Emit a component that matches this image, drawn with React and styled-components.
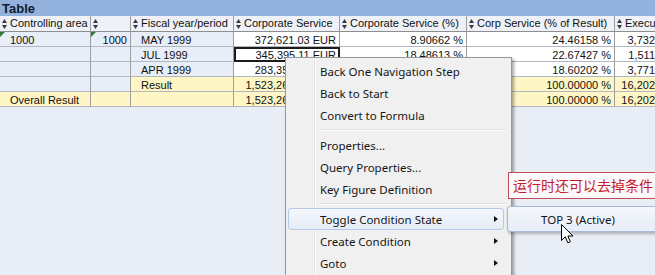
import React from 'react';
import styled, { createGlobalStyle } from 'styled-components';

const GlobalStyle = createGlobalStyle`
  html, body { margin: 0; padding: 0; background: #e9edf5; }
  body { width: 655px; height: 275px; overflow: hidden; }
`;

const Page = styled.div`
  position: relative;
  width: 655px;
  height: 275px;
  overflow: hidden;
  background: #e9edf5;
  font-family: "Liberation Sans", Arial, sans-serif;
`;

const TitleBar = styled.div`
  height: 16px;
  box-sizing: border-box;
  padding-left: 2px;
  background: #93b1dd;
  color: #111b2e;
  font: bold 13px/17px "Liberation Sans", Arial, sans-serif;
`;

const Grid = styled.div`
  display: grid;
  width: 722px;
  grid-template-columns: 91px 40px 103px 106px 127px 148px 107px;
  grid-template-rows: 16px;
  grid-auto-rows: 15px;
`;

const toneBg = {
  head: '#eef1f7',
  dim: '#e8eef8',
  data: '#ffffff',
  sum: '#fef6c4',
};

const Cell = styled.div`
  position: relative;
  box-sizing: border-box;
  overflow: hidden;
  white-space: nowrap;
  border-right: 1px solid #9d9d9d;
  border-bottom: 1px solid ${(p) => (p.$tone === 'head' ? '#8e8e8e' : '#b3b7bf')};
  background: ${(p) => toneBg[p.$tone || 'data']};
  color: #111;
  font-size: 11px;
  line-height: 14px;
  padding-top: 1px;
  padding-left: ${(p) => (p.$align === 'right' ? '0' : '10px')};
  padding-right: ${(p) => (p.$align === 'right' ? '3px' : '0')};
  text-align: ${(p) => p.$align || 'left'};
  outline: ${(p) => (p.$selected ? '2px solid #1c1c1c' : 'none')};
  outline-offset: -2px;
  &::before {
    content: '';
    display: ${(p) => (p.$marker ? 'block' : 'none')};
    position: absolute;
    left: 0;
    top: 0;
    border-top: 5px solid #2f7a36;
    border-right: 5px solid transparent;
  }
`;

const HeadCell = styled(Cell)`
  display: flex;
  align-items: center;
  gap: 3px;
  padding: 0 0 0 2px;
  line-height: 15px;
`;

const SortIconSvg = styled.svg`
  flex: none;
  width: 5px;
  height: 10px;
`;

const SortIcon = () => (
  <SortIconSvg viewBox="0 0 5 10">
    <path d="M2.5 0 L5 4 L0 4 Z M0 6 L5 6 L2.5 10 Z" fill="#3b3b3b" />
  </SortIconSvg>
);

const Menu = styled.div`
  position: absolute;
  left: 285px;
  top: 57px;
  width: 227px;
  height: 232px;
  box-sizing: border-box;
  padding: 2px;
  background: #f0f0f0;
  border: 1px solid #979797;
  box-shadow: 2px 2px 3px rgba(0, 0, 0, 0.35);
  font-family: "Noto Sans", "Open Sans", sans-serif;
  font-size: 11.5px;
  color: #151515;
  &::before {
    content: '';
    position: absolute;
    left: 28px;
    top: 2px;
    bottom: 0;
    width: 1px;
    background: #e2e3e3;
    border-right: 1px solid #ffffff;
  }
`;

const Item = styled.div`
  position: relative;
  display: flex;
  align-items: center;
  justify-content: space-between;
  height: 22px;
  box-sizing: border-box;
  margin-right: ${(p) => (p.$sub ? '0' : '5px')};
  padding: 0 5px 0 ${(p) => (p.$sub ? '33px' : '31px')};
  border: 1px solid ${(p) => (p.$active ? '#b4c9e6' : 'transparent')};
  border-radius: 3px;
  background: ${(p) =>
    p.$active ? 'linear-gradient(#f4f7fc, #e6edf8)' : 'transparent'};
  white-space: nowrap;
`;

const Arrow = styled.span`
  width: 0;
  height: 0;
  border-top: 3.5px solid transparent;
  border-bottom: 3.5px solid transparent;
  border-left: 4px solid #111;
`;

const Separator = styled.div`
  height: 8px;
  margin-left: 30px;
  margin-right: 2px;
  display: flex;
  flex-direction: column;
  justify-content: center;
  &::after {
    content: '';
    height: 1px;
    background: #e0e0e0;
    border-bottom: 1px solid #ffffff;
  }
`;

const SubMenu = styled.div`
  position: absolute;
  left: 507px;
  top: 206px;
  width: 165px;
  font-family: "Noto Sans", "Open Sans", sans-serif;
  font-size: 11.5px;
  color: #151515;
  box-shadow: 1px 2px 3px rgba(0, 0, 0, 0.25);
  border-radius: 3px;
  & > div {
    height: 26px;
    border-color: #a8b9d2;
  }
`;

const Note = styled.div`
  position: absolute;
  left: 508px;
  top: 172px;
  width: 165px;
  height: 27px;
  box-sizing: border-box;
  padding-left: 4px;
  border: 1px solid #bf4a5a;
  background: #fffafa;
  color: #c41a2c;
  font: 14px/25px "Noto Sans CJK SC", "Noto Sans", sans-serif;
  white-space: nowrap;
`;

const Cursor = styled.svg`
  position: absolute;
  left: 561px;
  top: 224px;
  width: 13px;
  height: 21px;
`;

const headers = [
  { t: 'Controlling area' },
  { t: '' },
  { t: 'Fiscal year/period' },
  { t: 'Corporate Service' },
  { t: 'Corporate Service (%)' },
  { t: 'Corp Service (% of Result)' },
  { t: 'Executive' },
];

const R = 'right';

const rows = [
  [
    { t: '1000', tone: 'dim', marker: true },
    { t: '1000', tone: 'dim', align: R, marker: true },
    { t: 'MAY 1999', tone: 'dim' },
    { t: '372,621.03 EUR', align: R },
    { t: '8.90662 %', align: R },
    { t: '24.46158 %', align: R },
    { t: '3,732,905.17 EUR', align: R },
  ],
  [
    { t: '', tone: 'dim' },
    { t: '', tone: 'dim' },
    { t: 'JUL 1999', tone: 'dim' },
    { t: '345,395.11 EUR', align: R, selected: true },
    { t: '18.48613 %', align: R },
    { t: '22.67427 %', align: R },
    { t: '1,511,228.40 EUR', align: R },
  ],
  [
    { t: '', tone: 'dim' },
    { t: '', tone: 'dim' },
    { t: 'APR 1999', tone: 'dim' },
    { t: '283,354.86 EUR', align: R },
    { t: '15.16570 %', align: R },
    { t: '18.60202 %', align: R },
    { t: '3,771,036.52 EUR', align: R },
  ],
  [
    { t: '', tone: 'dim' },
    { t: '', tone: 'dim' },
    { t: 'Result', tone: 'sum' },
    { t: '1,523,261.02 EUR', tone: 'sum', align: R },
    { t: '100.00000 %', tone: 'sum', align: R },
    { t: '100.00000 %', tone: 'sum', align: R },
    { t: '16,202,417.93 EUR', tone: 'sum', align: R },
  ],
  [
    { t: 'Overall Result', tone: 'sum' },
    { t: '', tone: 'sum' },
    { t: '', tone: 'sum' },
    { t: '1,523,261.02 EUR', tone: 'sum', align: R },
    { t: '100.00000 %', tone: 'sum', align: R },
    { t: '100.00000 %', tone: 'sum', align: R },
    { t: '16,202,417.93 EUR', tone: 'sum', align: R },
  ],
];

const menuItems = [
  { t: 'Back One Navigation Step' },
  { t: 'Back to Start' },
  { t: 'Convert to Formula' },
  { sep: true },
  { t: 'Properties...' },
  { t: 'Query Properties...' },
  { t: 'Key Figure Definition' },
  { sep: true },
  { t: 'Toggle Condition State', sub: true, active: true },
  { t: 'Create Condition', sub: true },
  { t: 'Goto', sub: true },
  { t: 'Save View', sub: false },
];

export default function App() {
  return (
    <Page>
      <GlobalStyle />
      <TitleBar>Table</TitleBar>
      <Grid>
        {headers.map((h, i) => (
          <HeadCell key={i} $tone="head">
            <SortIcon />
            {h.t}
          </HeadCell>
        ))}
        {rows.map((row, r) =>
          row.map((c, i) => (
            <Cell
              key={`${r}-${i}`}
              $tone={c.tone || 'data'}
              $align={c.align}
              $marker={c.marker}
              $selected={c.selected}
            >
              {c.t}
            </Cell>
          ))
        )}
      </Grid>

      <Menu>
        {menuItems.map((m, i) =>
          m.sep ? (
            <Separator key={i} />
          ) : (
            <Item key={i} $active={m.active}>
              <span>{m.t}</span>
              {m.sub && <Arrow />}
            </Item>
          )
        )}
      </Menu>

      <Note>运行时还可以去掉条件</Note>

      <SubMenu>
        <Item $active $sub>
          <span>TOP 3 (Active)</span>
        </Item>
      </SubMenu>

      <Cursor viewBox="0 0 13 21">
        <path
          d="M0.5 0.5 L0.5 16.5 L4.3 12.8 L6.8 18.8 L9.3 17.8 L6.9 12 L12 12 Z"
          fill="#ffffff"
          stroke="#000000"
          strokeWidth="1"
          strokeLinejoin="miter"
        />
      </Cursor>
    </Page>
  );
}
